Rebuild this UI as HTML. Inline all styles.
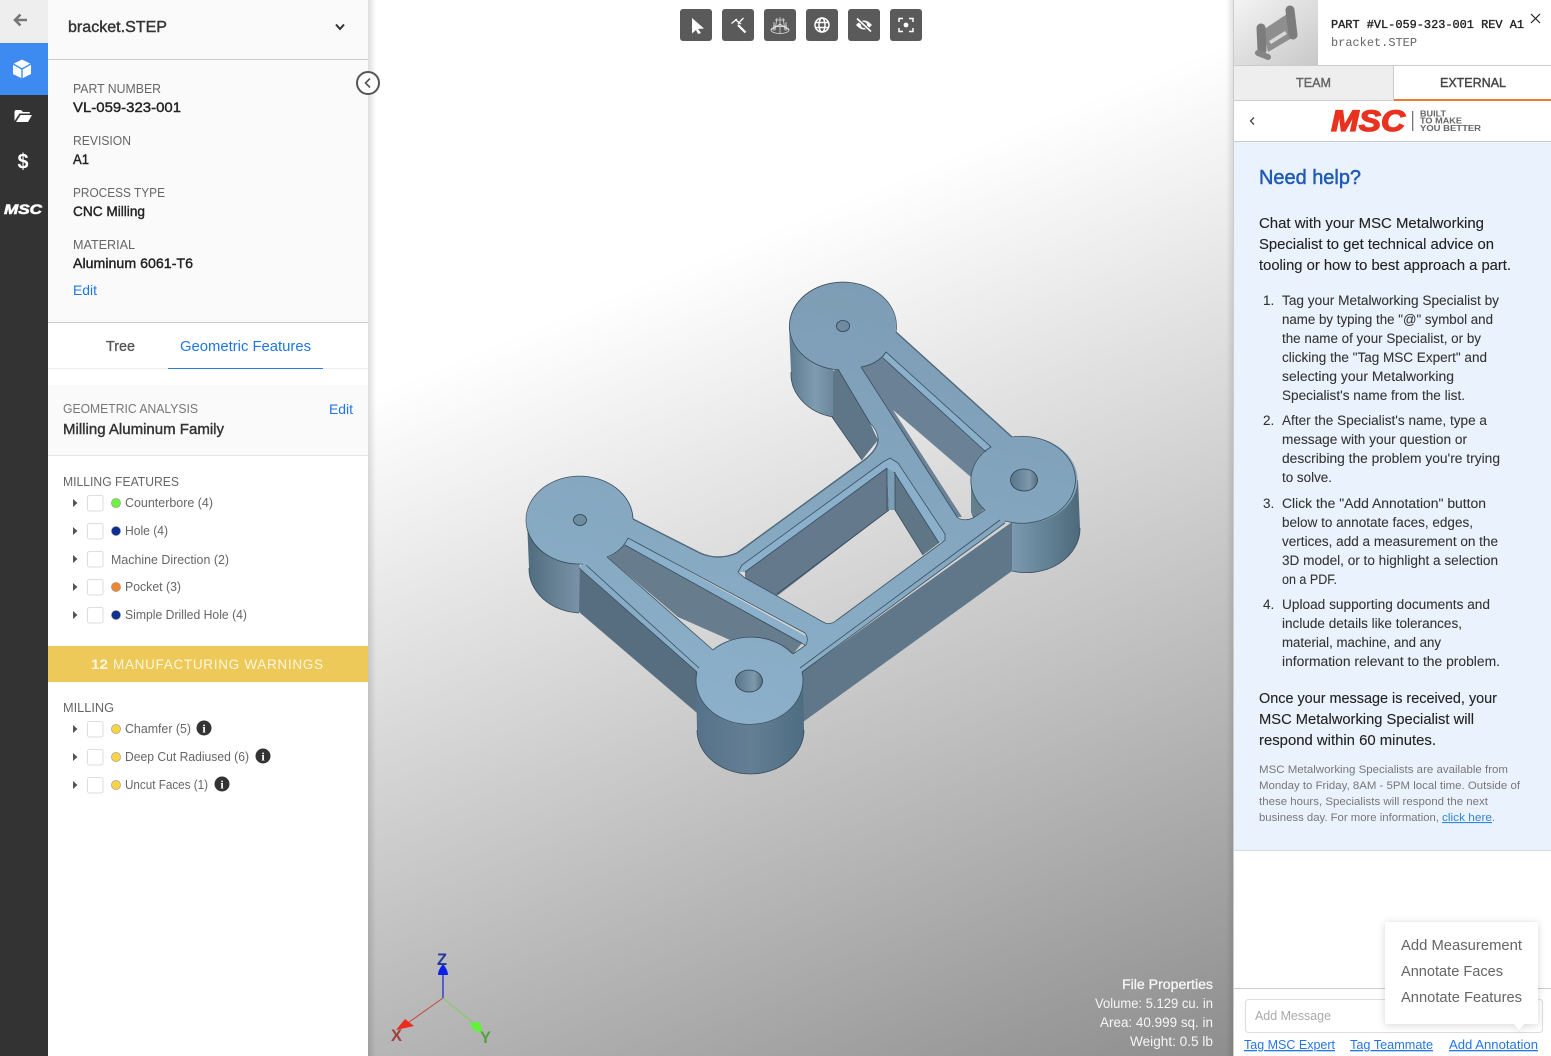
<!DOCTYPE html>
<html lang="en"><head><meta charset="utf-8"><title>bracket.STEP</title>
<style>
html,body{margin:0;padding:0;background:#fff;width:1551px;height:1056px;overflow:hidden}
svg{display:block}
text{font-family:"Liberation Sans",sans-serif;white-space:pre}
.mono{font-family:"Liberation Mono",monospace}
.l{font-size:13px;fill:#666}
.v{font-size:14px;fill:#222;stroke:#222;stroke-width:.4}
.a{font-size:14px;fill:#1f76e6}
.f{font-size:13px;fill:#666}
.p{font-size:15px;fill:#222;stroke:#222;stroke-width:.12}
.o{font-size:13.5px;fill:#333;stroke:#333;stroke-width:.08}
.s{font-size:11px;fill:#777}
.k{font-size:13px;fill:#2476e8;text-decoration:underline}
.m{font-size:15px;fill:#666}
.w{font-size:13.5px;fill:#f6f6f6}
.e{fill:none;stroke:#2c3f4e;stroke-width:.8;stroke-opacity:.85}
.ic{font-family:"Liberation Serif",serif;font-weight:bold;font-size:12px;fill:#fff;text-anchor:middle}
</style></head><body>
<svg xmlns="http://www.w3.org/2000/svg" width="1551" height="1056" viewBox="0 0 1551 1056">
<defs>
<linearGradient id="bg" gradientUnits="userSpaceOnUse" x1="192" y1="468" x2="549" y2="1337"><stop offset="0" stop-color="#fff"/><stop offset="1" stop-color="#8e8e8e"/></linearGradient>
<linearGradient id="top" gradientUnits="userSpaceOnUse" x1="843" y1="282" x2="749" y2="724"><stop offset="0" stop-color="#7d9db5"/><stop offset="1" stop-color="#8cb0ca"/></linearGradient>
<linearGradient id="cl"><stop offset="0" stop-color="#4f6b7e"/><stop offset="1" stop-color="#7b93a8"/></linearGradient>
<linearGradient id="ct"><stop offset="0" stop-color="#5d7a8e"/><stop offset=".6" stop-color="#7f9bb0"/><stop offset="1" stop-color="#6c879b"/></linearGradient>
<linearGradient id="cf"><stop offset="0" stop-color="#56728a"/><stop offset=".5" stop-color="#647f94"/><stop offset="1" stop-color="#4e6c82"/></linearGradient>
<linearGradient id="cr"><stop offset="0" stop-color="#7b9ab0"/><stop offset="1" stop-color="#4d697b"/></linearGradient>
<linearGradient id="hl"><stop offset="0" stop-color="#5a7689"/><stop offset=".7" stop-color="#7d98ac"/><stop offset="1" stop-color="#56707f"/></linearGradient>
<linearGradient id="sh"><stop offset="0" stop-color="#000" stop-opacity=".13"/><stop offset="1" stop-color="#000" stop-opacity="0"/></linearGradient>
<linearGradient id="sr" x1="1" x2="0"><stop offset="0" stop-color="#000" stop-opacity=".12"/><stop offset="1" stop-color="#000" stop-opacity="0"/></linearGradient>
<linearGradient id="th" x1="0" y1="0" x2="1" y2="1"><stop offset="0" stop-color="#f4f4f4"/><stop offset="1" stop-color="#c8c8c8"/></linearGradient>
<filter id="pop" x="-20%" y="-20%" width="140%" height="140%"><feDropShadow dx="0" dy="1" stdDeviation="4" flood-color="#000" flood-opacity=".16"/></filter>
</defs>

<!-- viewer -->
<rect x="368" y="0" width="866" height="1056" fill="url(#bg)"/>
<rect x="368" y="0" width="8" height="1056" fill="url(#sh)"/>
<rect x="1226" y="0" width="8" height="1056" fill="url(#sr)"/>

<!-- toolbar -->
<g fill="#5a5a5a"><rect x="680" y="9" width="32" height="32" rx="3"/><rect x="722" y="9" width="32" height="32" rx="3"/><rect x="764" y="9" width="32" height="32" rx="3"/><rect x="806" y="9" width="32" height="32" rx="3"/><rect x="848" y="9" width="32" height="32" rx="3"/><rect x="890" y="9" width="32" height="32" rx="3"/></g>
<path d="M692,18 L704,28.5 L698,29 L701,33 L698,34 L696,30 L692,33.5Z" fill="#fff"/>
<path d="M731.500,23.500 L737,19 M738,24 L741,20.500 L743.500,18 M735,19.500 L741,24" fill="none" stroke="#fff" stroke-width="1.300"/>
<path d="M738,25 L745.500,32.500" stroke="#fff" stroke-width="2.200" fill="none"/>
<g fill="none" stroke="#ddd" stroke-width=".8"><path d="M780,17 V34 M775,20 H785 M774,22 V31 M786,22 V31 M773,26 H787 M777,18 L775,30 M783,18 L785,30"/><ellipse cx="780" cy="30" rx="9" ry="3.5"/><path d="M771,30 L780,24 L789,30"/></g>
<g fill="none" stroke="#fff" stroke-width="1.5"><circle cx="822" cy="25" r="7"/><ellipse cx="822" cy="25" rx="3" ry="7"/><path d="M815,22.5 H829 M815,27.5 H829"/></g>
<path d="M856,25 Q864,16 872,25 Q864,34 856,25Z" fill="#fff"/><circle cx="864" cy="25" r="3" fill="#5a5a5a"/>
<path d="M857,18.5 L871,31.5" stroke="#5a5a5a" stroke-width="3.5"/><path d="M857,18.5 L871,31.5" stroke="#fff" stroke-width="1.6"/>
<path d="M899,22 V18.5 H903 M909,18.5 H913 V22 M913,28 V31.5 H909 M903,31.5 H899 V28" fill="none" stroke="#fff" stroke-width="1.5"/><circle cx="906" cy="25" r="2.4" fill="#fff"/>

<!-- part: exterior walls -->
<path d="M579,568 L579,612 L697,713 L697,672Z" fill="#566e7f"/>
<path d="M802,672 L803,722 L1012,571 L1012,522Z" fill="#5f7789"/>
<path d="M830,372 L832,417 L862,460 L878,440 L870,423 L838,369Z" fill="#5f7688"/>
<path d="M789,326 L791,372 A53.5,44 0 0 0 833,417 L833,370Z" fill="url(#ct)"/>
<path d="M527,520 L529,568 A53.5,44 0 0 0 579,613 L580,560Z" fill="url(#cl)"/>
<path d="M696,681 L697,730 A53.5,44 0 0 0 804,730 L803,681Z" fill="url(#cf)"/>
<path d="M1012,500 L1012,571 A53.5,44 0 0 0 1080,528 L1078,480Z" fill="url(#cr)"/>
<path d="M791,372 A53.5,44 0 0 0 833,417 M529,568 A53.5,44 0 0 0 579,613 M697,730 A53.5,44 0 0 0 804,730 M1012,571 A53.5,44 0 0 0 1080,528 M832,417 L862,460" class="e" stroke-opacity=".6"/>

<!-- interior walls -->
<path d="M607,557 L628,538 L807,637 L793,654 L730,640 L678,617Z" fill="#677d8e"/>
<path d="M861,367 L886,352 L991,447 L985,451 L972,478 L893,410 L962,517 L957,517Z" fill="#6b8296"/>
<path d="M971,470 L990,505 L973,518 L971,512Z" fill="#64808f"/>
<path d="M887,468 L745,572 L745,578 L777,596 L889,510Z" fill="#64798c"/>
<path d="M894,472 L939,543 L923,555 L895,510Z" fill="#5f7687"/>
<path d="M887,468 L895,472 L895,510 L889,510Z" fill="#7c9fb8"/>
<path d="M742,565 L883,462 L890,458 L898,463 L945,534 L945,540 L939,543 L894,472 L887,468 L745,572 L738,572Z" fill="#8ab0cc"/>
<path d="M628,538 L807,637 L806,645 L625,545Z" fill="#8ab0cc"/>
<path d="M886,352 L991,447 L986,452 L883,358Z" fill="#8ab0cc"/>

<!-- top surface -->
<path fill="url(#top)" fill-rule="evenodd" d="M580,520 L633,519 L700,553 Q718,561 737,553 L863,461 Q879,449 878,438 Q877,430 870,423 L838,369 L843,326 L896,332 L1012,437 L1024,480 L1005,523 L802,672 L749,681 L697,672 L579,568 L583,563Z
M607,557 Q622,551 628,538 L805,633 Q809,638 806,645 L793,654 L749,681 L713,650Z
M861,367 Q878,364 886,352 L991,447 L985,451 L1024,480 L985,510 L973,518 Q963,522 957,517Z
M883,462 L890,458 L898,463 L945,534 L945,540 L940,544 L837,620 Q830,626 823,622 L745,578 L738,572 L742,565Z"/>
<ellipse cx="842.5" cy="326" rx="53.5" ry="44" fill="url(#top)"/>
<ellipse cx="580" cy="520" rx="53.5" ry="44" fill="url(#top)"/>
<ellipse cx="749.5" cy="681" rx="53.5" ry="44" fill="url(#top)"/>
<ellipse cx="1024" cy="480" rx="53.5" ry="43.5" fill="url(#top)"/>
<ellipse cx="843" cy="326" rx="6.5" ry="5.5" fill="#6f8ba0" stroke="#2c3f4e" stroke-width=".8"/>
<ellipse cx="580" cy="520" rx="6.5" ry="5.5" fill="#6f8ba0" stroke="#2c3f4e" stroke-width=".8"/>
<ellipse cx="749" cy="681" rx="13.5" ry="11" fill="url(#hl)" stroke="#2c3f4e" stroke-width=".8"/>
<ellipse cx="1024" cy="480" rx="13.5" ry="11" fill="url(#hl)" stroke="#2c3f4e" stroke-width=".8"/>

<!-- part edges -->
<path class="e" d="M838,369.9 A53.5,44 0 1 1 896,332 M583,564 A53.5,44 0 1 1 633,519 M697,672 A53.5,44 0 1 0 802,672 M713,650 A53.5,44 0 0 1 793,654 M1012,437 A53.5,43.5 0 1 1 1005,521 M985,451 A53.5,43.5 0 0 0 985,510"/>
<path fill="none" stroke="#4f6779" stroke-width="1.400" d="M633,519 L700,553 Q718,561 737,553 L863,461 Q879,449 878,438 M896,332 L1012,437"/>
<path class="e" d="M870,423 L838,369 M878,438 Q877,430 870,423 M579,568 L697,672 M802,672 L1005,523 M586,565 L699,668 M800,668 L1000,520"/>
<path class="e" d="M607,557 Q622,551 628,538 L805,633 Q809,638 806,645 L793,654 M607,557 L713,650 M625,545 L805,645"/>
<path class="e" d="M861,367 Q878,364 886,352 L991,447 L985,451 M861,367 L957,517 Q963,522 973,518 L985,510 M883,358 L986,452"/>
<path class="e" d="M883,462 L890,458 L898,463 L945,534 L945,540 L940,544 L837,620 Q830,626 823,622 L745,578 L738,572 L742,565 L883,462 M887,468 L745,572 M894,472 L939,543 M887,468 V510 M895,472 V510 M889,510 L777,594 M895,510 L923,555"/>

<!-- axes -->
<path d="M443,998 V975" stroke="#1420d8" stroke-width="1.2"/>
<path d="M443,998 L405,1025" stroke="#c8443c" stroke-width="1"/>
<path d="M443,998 L477,1026" stroke="#7ad058" stroke-width="1"/>
<path d="M443,964 Q448,970 448,975 L443,975 L438,975 Q438,970 443,964Z" fill="#0a1fe8"/>
<path d="M414,1026 L396,1030 L405,1019Z" fill="#ec2c20"/>
<path d="M470,1023 L480,1022 L483,1033 L473,1030Z" fill="#63f23c"/>
<text x="437" y="965" textLength="10" lengthAdjust="spacingAndGlyphs" font-size="17" font-weight="bold" fill="#24389c">Z</text>
<text x="391" y="1041" textLength="11" lengthAdjust="spacingAndGlyphs" font-size="17" font-weight="bold" fill="#a0403c">X</text>
<text x="480" y="1043" textLength="11" lengthAdjust="spacingAndGlyphs" font-size="17" font-weight="bold" fill="#56a040">Y</text>

<text class="w" x="1122" y="989" textLength="91" lengthAdjust="spacingAndGlyphs" stroke="#f6f6f6" stroke-width=".3">File Properties</text>
<text class="w" x="1095" y="1008" textLength="118" lengthAdjust="spacingAndGlyphs">Volume: 5.129 cu. in</text>
<text class="w" x="1100" y="1027" textLength="113" lengthAdjust="spacingAndGlyphs">Area: 40.999 sq. in</text>
<text class="w" x="1130" y="1046" textLength="83" lengthAdjust="spacingAndGlyphs">Weight: 0.5 lb</text>

<!-- icon rail -->
<rect x="0" y="0" width="48" height="1056" fill="#333"/>
<rect x="0" y="0" width="48" height="43" fill="#eee"/>
<rect x="0" y="43" width="48" height="52" fill="#3d8bf0"/>
<path d="M27,20 H15 M20.5,14.5 L15,20 L20.5,25.5" fill="none" stroke="#777" stroke-width="2.6"/>
<path d="M22,59.5 L31,64 V74 L22,78.5 L13,74 V64Z" fill="#fff"/>
<path d="M13,64 L22,69 L31,64 M22,69 V78.5" fill="none" stroke="#3d8bf0" stroke-width="1.4"/>
<path d="M14.500,121 V112 Q14.500,110 16.500,110 H21 L23,112 H29 Q30,112 30,113.500 H19.500 Z M16,122 L20.500,115 H32 L28,122Z" fill="#fff"/>
<text x="17.500" y="168.500" textLength="11" lengthAdjust="spacingAndGlyphs" font-size="21" font-weight="bold" fill="#fff">$</text>
<text x="4" y="214" textLength="38" lengthAdjust="spacingAndGlyphs" font-size="14" font-weight="bold" font-style="italic" fill="#fff" stroke="#fff" stroke-width=".6">MSC</text>

<!-- left panel -->
<rect x="48" y="0" width="320" height="1056" fill="#fff"/>
<rect x="48" y="0" width="320" height="322" fill="#fafafa"/>
<rect x="48" y="59" width="320" height="1" fill="#ccc"/>
<rect x="48" y="322" width="320" height="1" fill="#ccc"/>
<text x="68" y="32" textLength="99" lengthAdjust="spacingAndGlyphs" font-size="16" fill="#333" stroke="#333" stroke-width=".4">bracket.STEP</text>
<path d="M336,24.500 L340,29 L344,24.500" fill="none" stroke="#333" stroke-width="2"/>

<text class="l" x="73" y="93" textLength="88" lengthAdjust="spacingAndGlyphs">PART NUMBER</text>
<text class="v" x="73" y="112" textLength="108" lengthAdjust="spacingAndGlyphs">VL-059-323-001</text>
<text class="l" x="73" y="145" textLength="58" lengthAdjust="spacingAndGlyphs">REVISION</text>
<text class="v" x="73" y="164" textLength="16" lengthAdjust="spacingAndGlyphs">A1</text>
<text class="l" x="73" y="197" textLength="92" lengthAdjust="spacingAndGlyphs">PROCESS TYPE</text>
<text class="v" x="73" y="216" textLength="72" lengthAdjust="spacingAndGlyphs">CNC Milling</text>
<text class="l" x="73" y="249" textLength="62" lengthAdjust="spacingAndGlyphs">MATERIAL</text>
<text class="v" x="73" y="268" textLength="120" lengthAdjust="spacingAndGlyphs">Aluminum 6061-T6</text>
<text class="a" x="73" y="295" textLength="24" lengthAdjust="spacingAndGlyphs">Edit</text>

<text x="106" y="351" textLength="29" lengthAdjust="spacingAndGlyphs" font-size="15" fill="#555" stroke="#555" stroke-width=".3">Tree</text>
<text class="a" x="180" y="351" textLength="131" lengthAdjust="spacingAndGlyphs" style="font-size:15px">Geometric Features</text>
<rect x="48" y="368" width="320" height="1" fill="#eee"/>
<rect x="168" y="368" width="155" height="1" fill="#2a7de1"/>

<rect x="48" y="385" width="320" height="70" fill="#fafafa"/>
<rect x="48" y="455" width="320" height="1" fill="#e6e6e6"/>
<text x="63" y="413" textLength="135" lengthAdjust="spacingAndGlyphs" font-size="12.500" fill="#777">GEOMETRIC ANALYSIS</text>
<text class="a" x="329" y="414" textLength="24" lengthAdjust="spacingAndGlyphs">Edit</text>
<text x="63" y="434" textLength="161" lengthAdjust="spacingAndGlyphs" font-size="15" fill="#333" stroke="#333" stroke-width=".4">Milling Aluminum Family</text>

<text class="l" x="63" y="486" textLength="116" lengthAdjust="spacingAndGlyphs">MILLING FEATURES</text>

<g fill="#555"><path d="M73,499 L77.500,503 L73,507Z M73,527 L77.500,531 L73,535Z M73,555 L77.500,559 L73,563Z M73,583 L77.500,587 L73,591Z M73,611 L77.500,615 L73,619Z M73,725 L77.500,729 L73,733Z M73,753 L77.500,757 L73,761Z M73,781 L77.500,785 L73,789Z"/></g>
<g fill="#fff" stroke="#ddd"><rect x="87.500" y="495.500" width="15.500" height="15.500" rx="2"/><rect x="87.500" y="523.500" width="15.500" height="15.500" rx="2"/><rect x="87.500" y="551.500" width="15.500" height="15.500" rx="2"/><rect x="87.500" y="579.500" width="15.500" height="15.500" rx="2"/><rect x="87.500" y="607.500" width="15.500" height="15.500" rx="2"/><rect x="87.500" y="721.500" width="15.500" height="15.500" rx="2"/><rect x="87.500" y="749.500" width="15.500" height="15.500" rx="2"/><rect x="87.500" y="777.500" width="15.500" height="15.500" rx="2"/></g>
<g stroke="#999" stroke-width=".6">
<circle cx="116" cy="503" r="4.600" fill="#6ff23f"/><circle cx="116" cy="531" r="4.600" fill="#0e2f91"/><circle cx="116" cy="587" r="4.600" fill="#f0862f"/><circle cx="116" cy="615" r="4.600" fill="#0e2f91"/>
<circle cx="116" cy="729" r="4.600" fill="#f8d544"/><circle cx="116" cy="757" r="4.600" fill="#f8d544"/><circle cx="116" cy="785" r="4.600" fill="#f8d544"/></g>
<text class="f" x="125" y="507" textLength="88" lengthAdjust="spacingAndGlyphs">Counterbore (4)</text>
<text class="f" x="125" y="535" textLength="43" lengthAdjust="spacingAndGlyphs">Hole (4)</text>
<text class="f" x="111" y="564" textLength="118" lengthAdjust="spacingAndGlyphs">Machine Direction (2)</text>
<text class="f" x="125" y="591" textLength="56" lengthAdjust="spacingAndGlyphs">Pocket (3)</text>
<text class="f" x="125" y="619" textLength="122" lengthAdjust="spacingAndGlyphs">Simple Drilled Hole (4)</text>

<rect x="48" y="646" width="320" height="36" fill="#edc95a"/>
<text x="91" y="669" textLength="17" lengthAdjust="spacingAndGlyphs" font-size="13.500" font-weight="bold" fill="#fdf6dc">12</text>
<text x="113" y="669" textLength="210" lengthAdjust="spacing" font-size="13.500" fill="#fdf6dc">MANUFACTURING WARNINGS</text>

<text class="l" x="63" y="712" textLength="51" lengthAdjust="spacingAndGlyphs">MILLING</text>
<text class="f" x="125" y="733" textLength="66" lengthAdjust="spacingAndGlyphs">Chamfer (5)</text>
<text class="f" x="125" y="761" textLength="124" lengthAdjust="spacingAndGlyphs">Deep Cut Radiused (6)</text>
<text class="f" x="125" y="789" textLength="83" lengthAdjust="spacingAndGlyphs">Uncut Faces (1)</text>
<circle cx="204" cy="728" r="7.500" fill="#333"/><text class="ic" x="204" y="732.500">i</text>
<circle cx="263" cy="756" r="7.500" fill="#333"/><text class="ic" x="263" y="760.500">i</text>
<circle cx="222" cy="784" r="7.500" fill="#333"/><text class="ic" x="222" y="788.500">i</text>

<circle cx="368" cy="83" r="11" fill="#fff" stroke="#555" stroke-width="2"/>
<path d="M370,78.500 L365.500,83 L370,87.500" fill="none" stroke="#555" stroke-width="1.600"/>

<!-- right panel -->
<rect x="1234" y="0" width="317" height="1056" fill="#fff"/>
<rect x="1233" y="0" width="1" height="1056" fill="#ccc"/>
<rect x="1234" y="0" width="84" height="65" fill="url(#th)"/>
<path d="M1263,30 L1287,14 L1292,38 L1268,52Z" fill="#8e8e8e"/>
<path d="M1269,41 L1285,31 L1287,34 L1271,44Z" fill="#d8d8d8"/>
<g fill="none" stroke-linecap="round">
<path d="M1290,10 L1293,35" stroke="#7c7c7c" stroke-width="9"/>
<path d="M1261,28 L1262,50" stroke="#7c7c7c" stroke-width="9"/>
<path d="M1258,53 L1268,57" stroke="#858585" stroke-width="6"/>
</g>
<rect x="1234" y="65" width="317" height="1" fill="#ccc"/>
<text class="mono" x="1331" y="28" textLength="193" lengthAdjust="spacingAndGlyphs" font-size="12" fill="#222" stroke="#222" stroke-width=".35">PART #VL-059-323-001 REV A1</text>
<text class="mono" x="1331" y="46" textLength="86" lengthAdjust="spacingAndGlyphs" font-size="12" fill="#666">bracket.STEP</text>
<path d="M1531,14 L1540,23 M1540,14 L1531,23" stroke="#222" stroke-width="1.200" fill="none"/>

<rect x="1234" y="66" width="160" height="34" fill="#eee"/>
<rect x="1393" y="66" width="1" height="34" fill="#ccc"/>
<rect x="1234" y="100" width="160" height="1" fill="#ccc"/>
<rect x="1394" y="99" width="157" height="2" fill="#ee7a30"/>
<text x="1296" y="87" textLength="35" lengthAdjust="spacingAndGlyphs" font-size="13" fill="#666" stroke="#666" stroke-width=".4">TEAM</text>
<text x="1440" y="87" textLength="66" lengthAdjust="spacingAndGlyphs" font-size="13" fill="#444" stroke="#444" stroke-width=".4">EXTERNAL</text>

<path d="M1254,117.500 L1250.500,121 L1254,124.500" fill="none" stroke="#444" stroke-width="1.300"/>
<text x="1331" y="131" textLength="74" lengthAdjust="spacingAndGlyphs" font-size="30" font-weight="bold" font-style="italic" fill="#e8321f" stroke="#e8321f" stroke-width="1.300">MSC</text>
<rect x="1412" y="111" width="1.300" height="20" fill="#777"/>
<g font-size="8" font-weight="bold" fill="#666">
<text x="1420" y="116.500" textLength="26" lengthAdjust="spacingAndGlyphs">BUILT</text>
<text x="1420" y="123.500" textLength="42" lengthAdjust="spacingAndGlyphs">TO MAKE</text>
<text x="1420" y="131" textLength="61" lengthAdjust="spacingAndGlyphs">YOU BETTER</text>
</g>

<rect x="1234" y="141" width="317" height="1" fill="#ccc"/>
<rect x="1234" y="142" width="317" height="708" fill="#eaf3fd"/>
<rect x="1234" y="850" width="317" height="1" fill="#d2dce6"/>

<text x="1259" y="184" textLength="102" lengthAdjust="spacingAndGlyphs" font-size="20" fill="#1f5bb5" stroke="#1f5bb5" stroke-width=".5">Need help?</text>
<text class="p" x="1259" y="228" textLength="225" lengthAdjust="spacingAndGlyphs">Chat with your MSC Metalworking</text>
<text class="p" x="1259" y="249" textLength="235" lengthAdjust="spacingAndGlyphs">Specialist to get technical advice on</text>
<text class="p" x="1259" y="270" textLength="252" lengthAdjust="spacingAndGlyphs">tooling or how to best approach a part.</text>

<text class="o" x="1263" y="305">1.</text>
<text class="o" x="1282" y="305" textLength="217" lengthAdjust="spacingAndGlyphs">Tag your Metalworking Specialist by</text>
<text class="o" x="1282" y="324" textLength="211" lengthAdjust="spacingAndGlyphs">name by typing the "@" symbol and</text>
<text class="o" x="1282" y="343" textLength="199" lengthAdjust="spacingAndGlyphs">the name of your Specialist, or by</text>
<text class="o" x="1282" y="362" textLength="205" lengthAdjust="spacingAndGlyphs">clicking the "Tag MSC Expert" and</text>
<text class="o" x="1282" y="381" textLength="172" lengthAdjust="spacingAndGlyphs">selecting your Metalworking</text>
<text class="o" x="1282" y="400" textLength="183" lengthAdjust="spacingAndGlyphs">Specialist's name from the list.</text>
<text class="o" x="1263" y="425">2.</text>
<text class="o" x="1282" y="425" textLength="205" lengthAdjust="spacingAndGlyphs">After the Specialist's name, type a</text>
<text class="o" x="1282" y="444" textLength="185" lengthAdjust="spacingAndGlyphs">message with your question or</text>
<text class="o" x="1282" y="463" textLength="218" lengthAdjust="spacingAndGlyphs">describing the problem you're trying</text>
<text class="o" x="1282" y="482" textLength="50" lengthAdjust="spacingAndGlyphs">to solve.</text>
<text class="o" x="1263" y="508">3.</text>
<text class="o" x="1282" y="508" textLength="204" lengthAdjust="spacingAndGlyphs">Click the "Add Annotation" button</text>
<text class="o" x="1282" y="527" textLength="191" lengthAdjust="spacingAndGlyphs">below to annotate faces, edges,</text>
<text class="o" x="1282" y="546" textLength="216" lengthAdjust="spacingAndGlyphs">vertices, add a measurement on the</text>
<text class="o" x="1282" y="565" textLength="216" lengthAdjust="spacingAndGlyphs">3D model, or to highlight a selection</text>
<text class="o" x="1282" y="584" textLength="55" lengthAdjust="spacingAndGlyphs">on a PDF.</text>
<text class="o" x="1263" y="609">4.</text>
<text class="o" x="1282" y="609" textLength="208" lengthAdjust="spacingAndGlyphs">Upload supporting documents and</text>
<text class="o" x="1282" y="628" textLength="180" lengthAdjust="spacingAndGlyphs">include details like tolerances,</text>
<text class="o" x="1282" y="647" textLength="159" lengthAdjust="spacingAndGlyphs">material, machine, and any</text>
<text class="o" x="1282" y="666" textLength="218" lengthAdjust="spacingAndGlyphs">information relevant to the problem.</text>

<text class="p" x="1259" y="703" textLength="238" lengthAdjust="spacingAndGlyphs">Once your message is received, your</text>
<text class="p" x="1259" y="724" textLength="215" lengthAdjust="spacingAndGlyphs">MSC Metalworking Specialist will</text>
<text class="p" x="1259" y="745" textLength="177" lengthAdjust="spacingAndGlyphs">respond within 60 minutes.</text>

<text class="s" x="1259" y="773" textLength="249" lengthAdjust="spacingAndGlyphs">MSC Metalworking Specialists are available from</text>
<text class="s" x="1259" y="789" textLength="261" lengthAdjust="spacingAndGlyphs">Monday to Friday, 8AM - 5PM local time. Outside of</text>
<text class="s" x="1259" y="805" textLength="229" lengthAdjust="spacingAndGlyphs">these hours, Specialists will respond the next</text>
<text class="s" x="1259" y="821" textLength="180" lengthAdjust="spacingAndGlyphs">business day. For more information,</text>
<text class="s" x="1442" y="821" textLength="50" lengthAdjust="spacingAndGlyphs" style="fill:#2f86d8;text-decoration:underline">click here</text>
<text class="s" x="1492" y="821">.</text>

<!-- message area -->
<rect x="1234" y="988" width="317" height="1" fill="#ccc"/>
<rect x="1245.500" y="999.500" width="297" height="33" rx="3" fill="#fff" stroke="#ddd"/>
<text x="1255" y="1020" textLength="76" lengthAdjust="spacingAndGlyphs" font-size="13" fill="#aaa">Add Message</text>
<text class="k" x="1244" y="1049" textLength="91" lengthAdjust="spacingAndGlyphs">Tag MSC Expert</text>
<text class="k" x="1350" y="1049" textLength="83" lengthAdjust="spacingAndGlyphs">Tag Teammate</text>
<text class="k" x="1449" y="1049" textLength="89" lengthAdjust="spacingAndGlyphs">Add Annotation</text>

<path filter="url(#pop)" d="M1387,922 H1536 Q1538,922 1538,924 V1022 Q1538,1024 1536,1024 H1524 L1519,1030 L1514,1024 H1387 Q1385,1024 1385,1022 V924 Q1385,922 1387,922Z" fill="#fff"/>
<text class="m" x="1401" y="950" textLength="121" lengthAdjust="spacingAndGlyphs">Add Measurement</text>
<text class="m" x="1401" y="976" textLength="102" lengthAdjust="spacingAndGlyphs">Annotate Faces</text>
<text class="m" x="1401" y="1002" textLength="121" lengthAdjust="spacingAndGlyphs">Annotate Features</text>
</svg>
</body></html>
